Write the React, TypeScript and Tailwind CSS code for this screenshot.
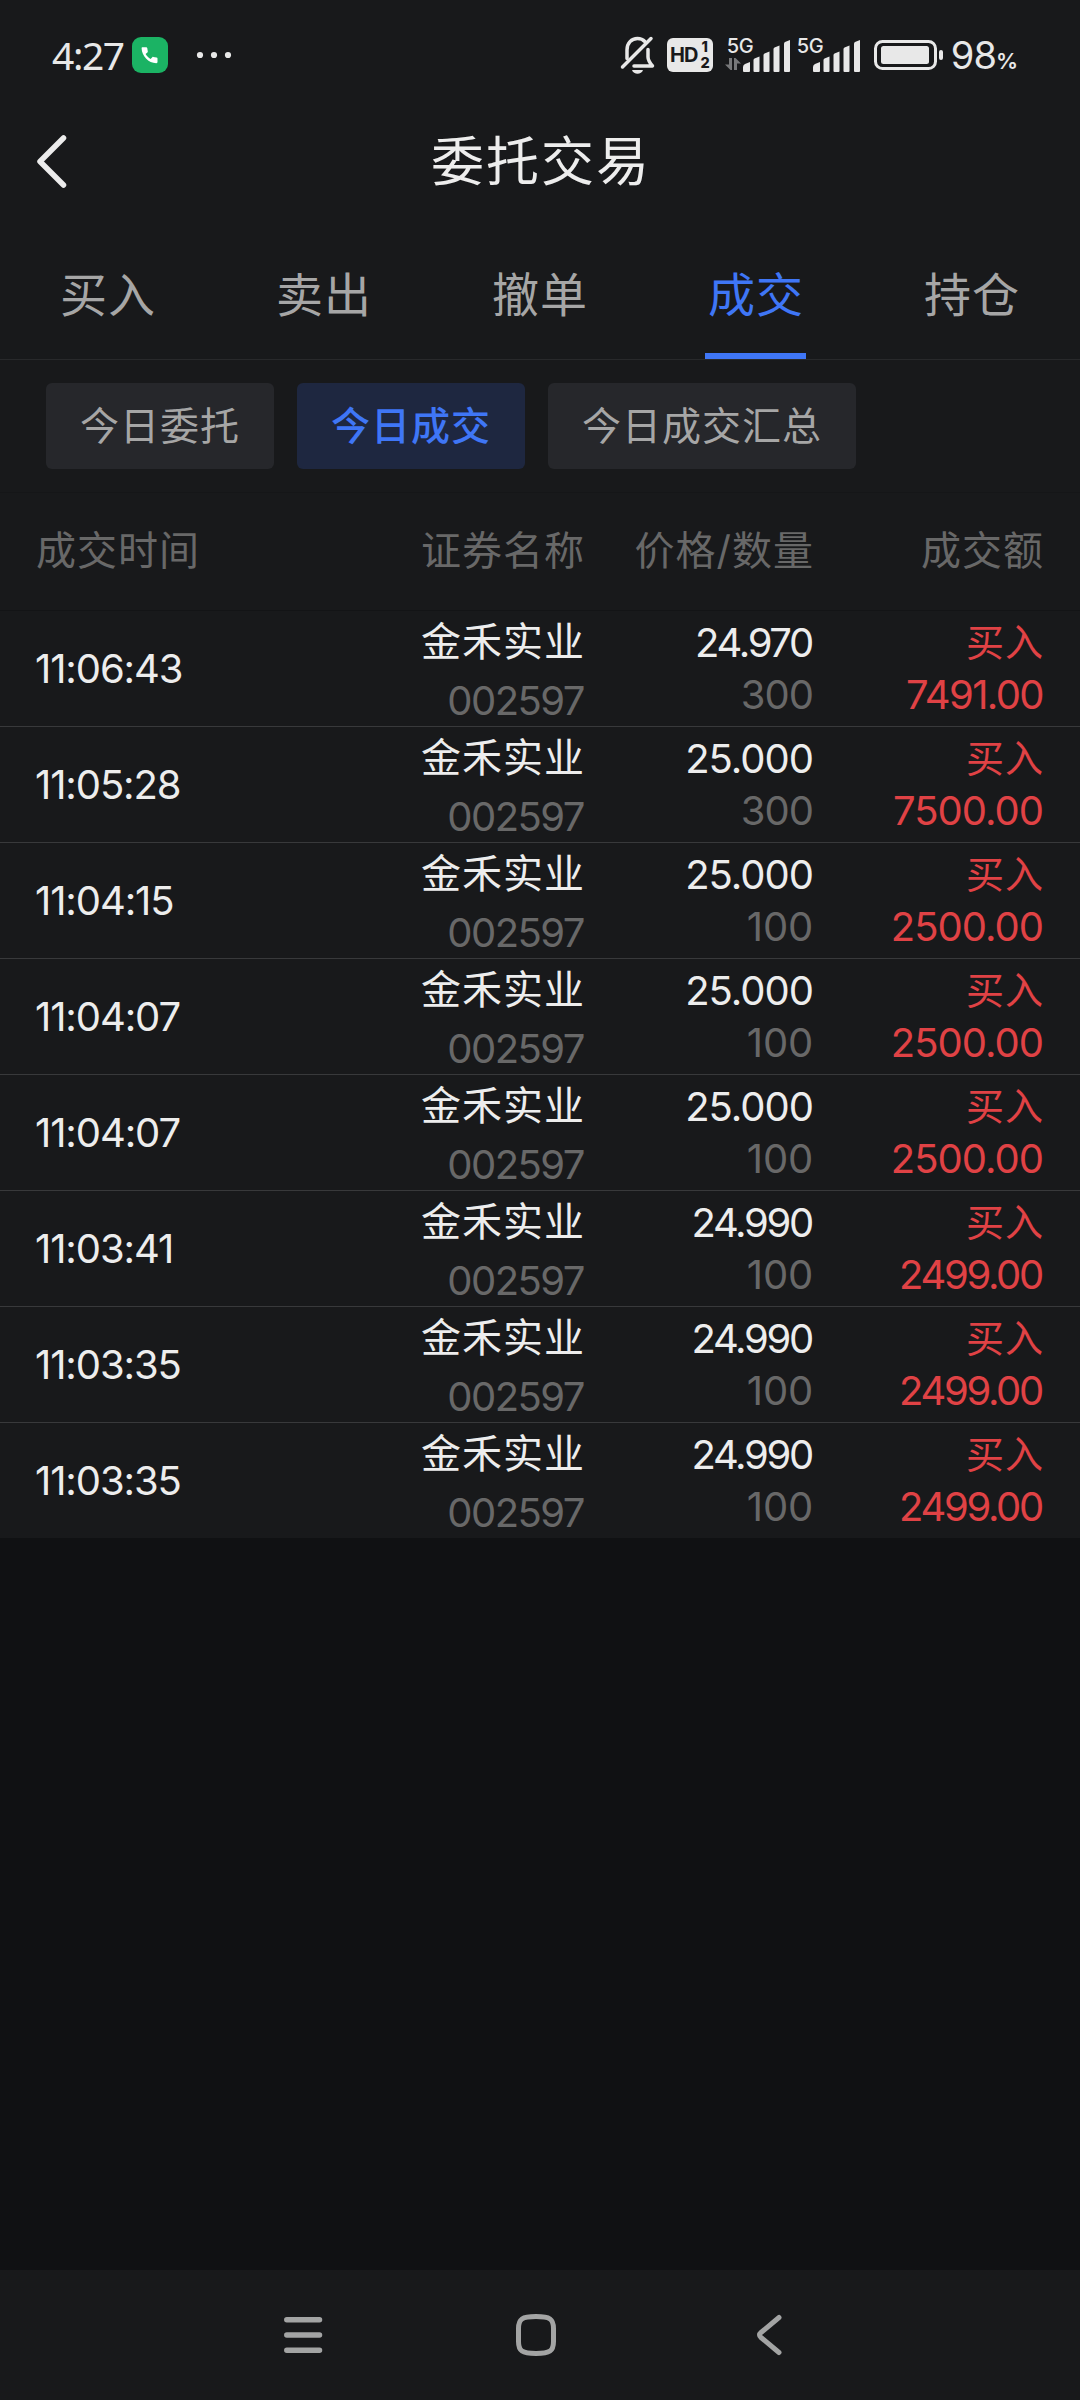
import React from "react";

type Trade = {
  time: string;
  name: string;
  code: string;
  price: string;
  qty: string;
  side: string;
  amount: string;
};

const stock = { name: "金禾实业", code: "002597", side: "买入" };

const trades: Trade[] = [
  { ...stock, time: "11:06:43", price: "24.970", qty: "300", amount: "7491.00" },
  { ...stock, time: "11:05:28", price: "25.000", qty: "300", amount: "7500.00" },
  { ...stock, time: "11:04:15", price: "25.000", qty: "100", amount: "2500.00" },
  { ...stock, time: "11:04:07", price: "25.000", qty: "100", amount: "2500.00" },
  { ...stock, time: "11:04:07", price: "25.000", qty: "100", amount: "2500.00" },
  { ...stock, time: "11:03:41", price: "24.990", qty: "100", amount: "2499.00" },
  { ...stock, time: "11:03:35", price: "24.990", qty: "100", amount: "2499.00" },
  { ...stock, time: "11:03:35", price: "24.990", qty: "100", amount: "2499.00" },
];

const tabs = ["买入", "卖出", "撤单", "成交", "持仓"];
const filters = ["今日委托", "今日成交", "今日成交汇总"];

function numTracking(value: string) {
  if (value.startsWith("24")) return "tracking-[-2.3px] pr-[2px]";
  if (value.startsWith("74")) return "tracking-[-1.6px] pr-px";
  if (value === "100") return "tracking-[-0.2px] pr-px";
  return "tracking-[-1px] pr-px";
}

function Signal() {
  return (
    <svg className="h-8 w-[48px]" viewBox="0 0 48 32" fill="#e8e8e8">
      <path d="M0 31v-4q0-2 2-3l5-2v9q0 1-1 1H1q-1 0-1-1z" />
      <path d="M10.500 31V20q0-1 1-1.500l5-2V31q0 1-1 1h-4q-1 0-1-1z" />
      <path d="M20.500 31V15q0-1 1-1.500l5-2V31q0 1-1 1h-4q-1 0-1-1z" />
      <path d="M30.500 31V9q0-1 1-1.500l5-2V31q0 1-1 1h-4q-1 0-1-1z" />
      <path d="M41 31V3.500q0-1 1-1.500l5-2V31q0 1-1 1h-4q-1 0-1-1z" />
    </svg>
  );
}

function StatusBar() {
  return (
    <div className="flex h-[110px] items-center pl-[52px] pr-[62px] text-[#e8e8e8]">
      <span className="w-20 pb-[2px] font-['Noto_Sans'] text-[39px] leading-none tracking-[-1.4px]">4:27</span>
      <svg className="size-9" viewBox="0 0 36 36">
        <rect width="36" height="36" rx="9" fill="#1bb364" />
        <path
          d="M10.200 10.200h4c.6 0 1 .4 1.100 1l.5 3.200c0 .4-.1.700-.4 1l-1.800 1.700c1.200 2.100 2.900 3.700 5 4.900l1.700-1.800c.3-.3.7-.4 1-.3l3.200.6c.6.100 1 .5 1 1v3.600c0 .7-.5 1.100-1.100 1.100C16.200 26 9.900 19 9.600 11.200c0-.6.2-1 .6-1z"
          fill="#fff"
        />
      </svg>
      {/* mais notificações */}
      <svg className="ml-7 h-2 w-9" viewBox="0 0 36 8" fill="#e8e8e8">
        <circle cx="4" cy="4" r="3.100" />
        <circle cx="18" cy="4" r="3.100" />
        <circle cx="32" cy="4" r="3.100" />
      </svg>

      <div className="ml-auto flex items-center">
        <svg className="h-[38px] w-9" viewBox="0 0 36 38" fill="none" stroke="#e8e8e8" strokeWidth="3.500" strokeLinecap="round">
          <path d="M7 22.500V14C7 7 11.500 2.500 17.500 2.500c3 0 5.500 1 7.300 3" />
          <path d="M28 13.500V21c0 3 1.500 5.500 4.500 9H14" strokeLinejoin="round" />
          <path d="M31 2.500L2.500 31" />
          <path d="M12 34h11c-1.500 5-9.500 5-11 0z" fill="#e8e8e8" stroke="none" />
        </svg>
        <div className="ml-[11px] flex h-[34px] w-[46px] items-center justify-center rounded-md bg-[#e8e8e8] text-[#18191b]">
          <span className="font-['Inter'] text-[20px] font-bold leading-none tracking-[-1px]">HD</span>
          <span className="ml-[3px] flex flex-col font-['Inter'] text-[14.5px] font-extrabold leading-[16px]">
            <span className="pl-px">1</span>
            <span>2</span>
          </span>
        </div>
        <div className="relative ml-[14px] h-[36px] w-[64px]">
          <span className="absolute left-0 top-0 font-['Inter'] text-[20px] font-medium leading-[18px] tracking-[-0.500px]">5G</span>
          <svg className="absolute -left-0.5 top-[21px] h-3 w-4" viewBox="0 0 16 12" fill="#77787a">
            <path d="M4 0h3v12H5.500L0 6.500h4zM9 0h1.500L16 5.500h-4V12H9z" />
          </svg>
          <span className="absolute left-4 top-[3px]">
            <Signal />
          </span>
        </div>
        <div className="relative ml-[6px] h-[36px] w-[64px]">
          <span className="absolute left-0 top-0 font-['Inter'] text-[20px] font-medium leading-[18px] tracking-[-0.500px]">5G</span>
          <span className="absolute left-4 top-[3px]">
            <Signal />
          </span>
        </div>
        <svg className="ml-[13px] h-[30px] w-[70px]" viewBox="0 0 70 30">
          <rect x="1.500" y="1.500" width="60" height="27" rx="7" fill="none" stroke="#e8e8e8" strokeWidth="3" />
          <rect x="7" y="6" width="48" height="18" rx="2.500" fill="#e8e8e8" />
          <rect x="65" y="10" width="4" height="10" rx="2" fill="#e8e8e8" />
        </svg>
        <span className="ml-[7px] flex items-baseline font-['Inter'] leading-none">
          <span className="text-[38px] tracking-[-1px]">98</span>
          <span className="text-[22px] font-semibold">%</span>
        </span>
      </div>
    </div>
  );
}

function Header() {
  return (
    <header className="grid h-[130px] grid-cols-[1fr_auto_1fr] items-start">
      <svg className="ml-[35px] mt-6 h-14 w-8" viewBox="0 0 32 56" fill="none" stroke="#ececec" strokeWidth="5.500" strokeLinecap="round" strokeLinejoin="round">
        <path d="M28.500 4L5 27.500 28.500 51" />
      </svg>
      <h1 className="mt-[14px] pl-[2px] text-[53px] leading-[76px] tracking-[2px] text-[#ededed]">委托交易</h1>
      <span />
    </header>
  );
}

function TradeRow({ trade, last }: { trade: Trade; last: boolean }) {
  return (
    <div
      className={`grid grid-cols-[1fr_260px_229px_230px] pl-[35px] pr-9 text-right text-[#ededed] ${
        last ? "h-[115px]" : "h-[116px] border-b border-[#38393b]"
      }`}
    >
      <div className="pt-[33px] text-left text-[40px] leading-[50px] tracking-[-1.1px]">{trade.time}</div>
      <div>
        <p className="pt-1.5 text-[40px] leading-[50px] tracking-[1px]">{trade.name}</p>
        <p className="mt-[9px] pr-px text-[40px] leading-[50px] tracking-[-1.5px] text-[#686868]">{trade.code}</p>
      </div>
      <div className="text-[40px] leading-[50px]">
        <p className={`pt-[7px] ${numTracking(trade.price)}`}>{trade.price}</p>
        <p className={`mt-[2px] text-[#686868] ${numTracking(trade.qty)}`}>{trade.qty}</p>
      </div>
      <div className="leading-[50px] text-[#e04245]">
        <p className="pt-1.5 text-[38px] tracking-[1px]">{trade.side}</p>
        <p className={`mt-[3px] text-[40px] ${numTracking(trade.amount)}`}>{trade.amount}</p>
      </div>
    </div>
  );
}

function NavBar() {
  return (
    <nav className="flex h-[130px] items-center pl-[283px] text-[#a3a4a4]">
      <svg className="h-11 w-10" viewBox="0 0 40 44" stroke="currentColor" strokeWidth="5.500" strokeLinecap="round">
        <path d="M3.800 6.700h32.700M3.800 22h32.700M3.800 37.300h32.700" />
      </svg>
      <svg className="ml-[191px] h-11 w-11" viewBox="0 0 44 44" fill="none" stroke="currentColor" strokeWidth="5">
        <path d="M22 3.500c14 0 17.500 2.500 17.500 12v13c0 9.500-3.500 12-17.500 12s-17.500-2.500-17.500-12v-13c0-9.500 3.500-12 17.500-12z" />
      </svg>
      <svg className="ml-[196px] h-11 w-8" viewBox="0 0 32 44" fill="none" stroke="currentColor" strokeWidth="5" strokeLinecap="round">
        <path d="M25 4.500L7 19.500q-3 2.500 0 5L25 39.500" />
      </svg>
    </nav>
  );
}

export default function App() {
  const activeTab = "成交";
  const activeFilter = "今日成交";

  return (
    <main className="flex h-[2400px] w-[1080px] flex-col overflow-hidden bg-[#18191b] font-['Inter','Noto_Sans_CJK_SC',sans-serif]">
      <StatusBar />
      <Header />

      {/* abas */}
      <div className="flex h-[120px] border-b border-[#28292b]">
        {tabs.map((tab) => (
          <button
            key={tab}
            type="button"
            className={`flex flex-1 flex-col items-center justify-between text-[47px] tracking-[1px] ${
              tab === activeTab ? "text-[#3f76f6]" : "text-[#a6a6a6]"
            }`}
          >
            <span className="pt-[20px] leading-[70px]">{tab}</span>
            {tab === activeTab && <span className="mr-px h-1.5 w-[101px] bg-[#3f76f6]" />}
          </button>
        ))}
      </div>

      {/* filtros */}
      <div className="flex h-[133px] gap-[23px] border-b border-[#151618] pl-[46px] pt-[23px]">
        {filters.map((f) => (
          <button
            key={f}
            type="button"
            className={`h-[86px] rounded-md px-[34px] text-[39px] leading-[84px] tracking-[1px] ${
              f === activeFilter
                ? "bg-[#1e2740] font-medium text-[#3f76f6]"
                : "bg-[#26272b] text-[#a6a6a6]"
            }`}
          >
            {f}
          </button>
        ))}
      </div>

      {/* cabeçalho da tabela */}
      <div className="grid h-[118px] grid-cols-[1fr_260px_229px_230px] border-b border-[#131416] px-9 text-right text-[40px] leading-[116px] tracking-[1px] text-[#686868]">
        <span className="text-left">成交时间</span>
        <span>证券名称</span>
        <span>价格/数量</span>
        <span>成交额</span>
      </div>

      <section>
        {trades.map((t, i) => (
          <TradeRow key={i} trade={t} last={i === trades.length - 1} />
        ))}
      </section>

      <div className="flex-1 bg-[#101113]" />
      <NavBar />
    </main>
  );
}
